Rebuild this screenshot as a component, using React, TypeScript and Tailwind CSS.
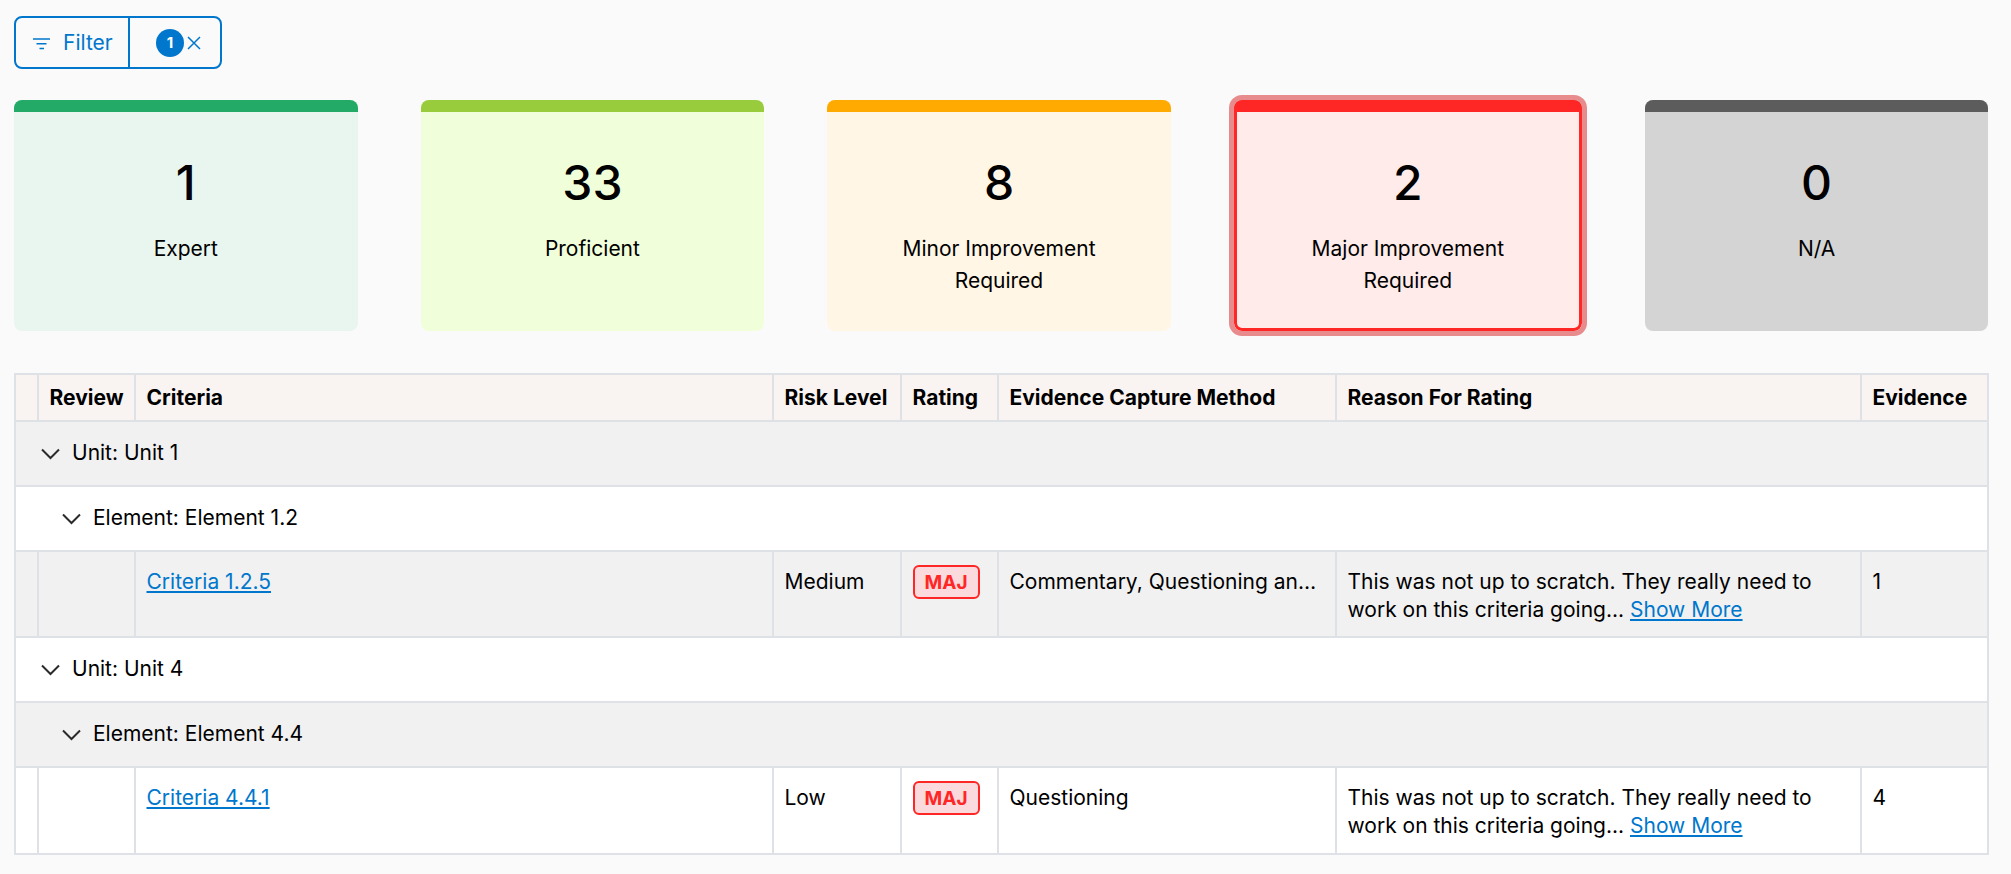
const cards = [
  { value: "1", label: "Expert", bar: "bg-[#22aa66]", body: "bg-[#e9f6f0]" },
  { value: "33", label: "Proficient", bar: "bg-[#99cc3d]", body: "bg-[#f0ffd9]" },
  { value: "8", label: "Minor Improvement Required", bar: "bg-[#ffaa00]", body: "bg-[#fff6e5]" },
  { value: "2", label: "Major Improvement Required", bar: "bg-[#ff2626]", body: "bg-[#ffebe9]", selected: true },
  { value: "0", label: "N/A", bar: "bg-[#5c5c5c]", body: "bg-[#d4d4d4]" },
];

const cell = "border-2 border-[#dee2e6] px-[10.5px] pt-[16px] pb-[12px] align-top";
const head = "h-[47px] border-2 border-[#dee2e6] bg-[#f9f4f2] px-[10.5px] py-0 text-left font-bold";
const link = "text-[#0077cc] underline";

function GroupRow({ label, level, shaded }: { label: string; level: number; shaded?: boolean }) {
  return (
    <tr className={shaded ? "bg-[#f1f1f1]" : "bg-white"}>
      <td colSpan={8} className="h-[65px] border-2 border-[#dee2e6] p-0">
        <div className={`flex items-center gap-[12px] ${level === 0 ? "pl-[25px]" : "pl-[46px]"}`}>
          <svg width="19" height="12" viewBox="0 0 19 12" fill="none" stroke="#2b2b2b" strokeWidth="2">
            <path d="M1 1.5l8.5 8.5L18 1.5" />
          </svg>
          <span className="pb-[2px]">{label}</span>
        </div>
      </td>
    </tr>
  );
}

function DataRow({ criteria, risk, method, evidence, shaded, last }: { criteria: string; risk: string; method: string; evidence: string; shaded?: boolean; last?: boolean }) {
  return (
    <tr className={`${shaded ? "bg-[#f1f1f1]" : "bg-white"} ${last ? "h-[87px]" : "h-[86px]"}`}>
      <td className={cell} />
      <td className={cell} />
      <td className={cell}>
        <a href="#" className={link}>{criteria}</a>
      </td>
      <td className={cell}>{risk}</td>
      <td className={cell}>
        <span className="-mt-[3px] flex h-[34px] w-[67px] items-center justify-center rounded-[6px] border-2 border-[#ff2626] bg-[#fadadd] pt-px text-[19px] font-bold text-[#ff2626]">MAJ</span>
      </td>
      <td className={cell}>
        <div className="truncate">{method}</div>
      </td>
      <td className={cell}>
        This was not up to scratch. They really need to work on this criteria going...{" "}
        <a href="#" className={link}>Show More</a>
      </td>
      <td className={cell}>{evidence}</td>
    </tr>
  );
}

export default function App() {
  return (
    <div className="min-h-[874px] bg-[#fafafa] pt-4 pr-[24px] pl-[14px] font-['Inter',sans-serif] text-[21px] leading-[28px] text-black">
      <div className="inline-flex h-[53px] w-[208px] rounded-[8px] border-2 border-[#0077cc] text-[#0077cc]">
        <div className="flex w-[114px] items-center gap-[13px] border-r-2 border-[#0077cc] pl-[17px]">
          <svg width="17" height="12" viewBox="0 0 17 12" fill="none" stroke="currentColor" strokeWidth="1.5" className="mt-[2px]">
            <path d="M0 1h17M3.5 5.75h10M6.5 10.5h4.5" />
          </svg>
          <span>Filter</span>
        </div>
        <div className="flex flex-1 items-center pl-[26px]">
          <span className="flex h-[28px] w-[28px] items-center justify-center rounded-full bg-[#0077cc] text-[15px] font-bold text-white">1</span>
          <svg width="24" height="24" viewBox="0 0 24 24" fill="none" stroke="currentColor" strokeWidth="1.5" className="-ml-[2px]">
            <path d="M6 6l12 12M18 6L6 18" />
          </svg>
        </div>
      </div>

      <div className="mt-[31px] flex gap-[63px]">
        {cards.map((c) => (
          <div
            key={c.label}
            className={`flex h-[231px] shrink-0 flex-col overflow-hidden rounded-[8px] ${c.body} ${c.selected ? "w-[348px] shadow-[inset_0_0_0_3px_#ff2626] outline-[5px] outline-[#e78b8d]" : "w-[343.6px]"}`}
          >
            <div className={`h-3 shrink-0 ${c.bar}`} />
            <div className="flex flex-col items-center px-[60px] pt-[36px] text-center">
              <div className="text-[48px] leading-[70px] font-medium">{c.value}</div>
              <div className="mt-[15px] leading-[32px]">{c.label}</div>
            </div>
          </div>
        ))}
      </div>

      <table className="mt-[42px] w-full table-fixed border-collapse border-2 border-[#dee2e6]">
        <colgroup>
          <col className="w-[23px]" />
          <col className="w-[97px]" />
          <col className="w-[638px]" />
          <col className="w-[128px]" />
          <col className="w-[97px]" />
          <col className="w-[338px]" />
          <col className="w-[525px]" />
          <col className="w-[127px]" />
        </colgroup>
        <thead>
          <tr>
            <th className={head} />
            <th className={head}>Review</th>
            <th className={head}>Criteria</th>
            <th className={head}>Risk Level</th>
            <th className={head}>Rating</th>
            <th className={head}>Evidence Capture Method</th>
            <th className={head}>Reason For Rating</th>
            <th className={head}>Evidence</th>
          </tr>
        </thead>
        <tbody>
          <GroupRow label="Unit: Unit 1" level={0} shaded />
          <GroupRow label="Element: Element 1.2" level={1} />
          <DataRow criteria="Criteria 1.2.5" risk="Medium" method="Commentary, Questioning and Observation" evidence="1" shaded />
          <GroupRow label="Unit: Unit 4" level={0} />
          <GroupRow label="Element: Element 4.4" level={1} shaded />
          <DataRow criteria="Criteria 4.4.1" risk="Low" method="Questioning" evidence="4" last />
        </tbody>
      </table>
    </div>
  );
}
